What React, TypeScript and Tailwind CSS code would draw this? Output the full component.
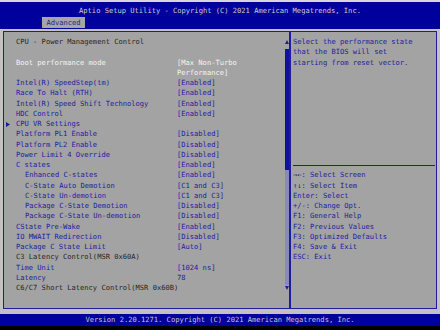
import React from "react";

type Row = {
  label?: string;
  value?: string;
  color?: "blue" | "white" | "dark";
  indent?: boolean;
  arrow?: boolean;
};

const rows: Row[] = [
  { label: "CPU - Power Management Control", color: "dark" },
  {},
  { label: "Boot performance mode", value: "[Max Non-Turbo", color: "white" },
  { label: "", value: "Performance]", color: "white" },
  { label: "Intel(R) SpeedStep(tm)", value: "[Enabled]" },
  { label: "Race To Halt (RTH)", value: "[Enabled]" },
  { label: "Intel(R) Speed Shift Technology", value: "[Enabled]" },
  { label: "HDC Control", value: "[Enabled]" },
  { label: "CPU VR Settings", arrow: true },
  { label: "Platform PL1 Enable", value: "[Disabled]" },
  { label: "Platform PL2 Enable", value: "[Disabled]" },
  { label: "Power Limit 4 Override", value: "[Disabled]" },
  { label: "C states", value: "[Enabled]" },
  { label: "Enhanced C-states", value: "[Enabled]", indent: true },
  { label: "C-State Auto Demotion", value: "[C1 and C3]", indent: true },
  { label: "C-State Un-demotion", value: "[C1 and C3]", indent: true },
  { label: "Package C-State Demotion", value: "[Disabled]", indent: true },
  { label: "Package C-State Un-demotion", value: "[Disabled]", indent: true },
  { label: "CState Pre-Wake", value: "[Enabled]" },
  { label: "IO MWAIT Redirection", value: "[Disabled]" },
  { label: "Package C State Limit", value: "[Auto]" },
  { label: "C3 Latency Control(MSR 0x60A)", color: "dark" },
  { label: "Time Unit", value: "[1024 ns]" },
  { label: "Latency", value: "78" },
  { label: "C6/C7 Short Latency Control(MSR 0x60B)", color: "dark" },
];

const keys = [
  "\u2192\u2190: Select Screen",
  "\u2191\u2193: Select Item",
  "Enter: Select",
  "+/-: Change Opt.",
  "F1: General Help",
  "F2: Previous Values",
  "F3: Optimized Defaults",
  "F4: Save & Exit",
  "ESC: Exit",
];

function colorClass(c?: Row["color"]) {
  if (c === "white") return "text-[#f4f4f4]";
  if (c === "dark") return "text-[#262626]";
  return "text-[#1c1ca0]";
}

export default function App() {
  return (
    <div className="w-[440px] h-[330px] overflow-hidden bg-[#c2c2c2] flex flex-col font-['DejaVu_Sans_Mono',monospace] text-[7.1px] leading-[10.25px]">
      <div className="h-[2px] bg-[#d6d6d6]" />
      <div className="h-[27px] bg-[#00009c] flex flex-col">
        <div className="pt-[4px] h-[14px] leading-[10px] text-center text-[#cfcfcf] whitespace-pre">
          Aptio Setup Utility - Copyright (C) 2021 American Megatrends, Inc.
        </div>
        <div className="ml-[42px] mt-[1px] w-[43px] h-[11px] bg-[#a6a6a6] text-[#1c1ca0] leading-[11px] text-center">
          Advanced
        </div>
      </div>
      <div className="h-[2px]" />
      <div className="mx-[3px] h-[278px] border border-[#1c1c9c] bg-[#a3a3a3] flex">
        {/* Left list */}
        <div className="w-[280px] pt-[5px] flex flex-col">
          {rows.map((r, i) => (
            <div key={i} className={`flex h-[10.25px] whitespace-pre ${colorClass(r.color)}`}>
              <div className="w-[12px] pl-[2px] flex items-center">
                {r.arrow && (
                  <svg width="4" height="5" viewBox="0 0 4 5">
                    <polygon points="0,0 4,2.5 0,5" fill="#1c1ca0" />
                  </svg>
                )}
              </div>
              <div className={`w-[161px] ${r.indent ? "pl-[9px]" : ""}`}>{r.label}</div>
              <div>{r.value}</div>
            </div>
          ))}
        </div>
        {/* Scrollbar */}
        <div className="w-[5px] flex flex-col items-center pt-[8px]">
          <svg width="4" height="4" viewBox="0 0 4 4" className="block">
            <polygon points="2,0 4,4 0,4" fill="#1c1ca0" />
          </svg>
          <div className="mt-[5px] w-[4px] h-[121px] bg-[#10109c]" />
          <div className="w-[4px] h-[115px] bg-[#8a8ab8]" />
          <svg width="4" height="4" viewBox="0 0 4 4" className="block mt-[1px]">
            <polygon points="0,0 4,0 2,4" fill="#1c1ca0" />
          </svg>
        </div>
        <div className="w-[2px] bg-[#1c1c9c]" />
        {/* Right help panel */}
        <div className="flex-1 pt-[5px] pl-[2px] pr-[1px] flex flex-col text-[#1c1ca0] whitespace-pre">
          <div className="h-[10.25px]">Select the performance state</div>
          <div className="h-[10.25px]">that the BIOS will set</div>
          <div className="h-[10.25px]">starting from reset vector.</div>
          <div className="h-[92.25px]" />
          <div className="h-[10.25px] flex items-center">
            <div className="h-px w-full bg-[#1c1c9c]" />
          </div>
          {keys.map((k) => (
            <div key={k} className="h-[10.25px]">{k}</div>
          ))}
        </div>
      </div>
      <div className="h-[5px]" />
      <div className="h-[12px] bg-[#00009c] text-[#c8c8c8] text-center leading-[12px] whitespace-pre">
        Version 2.20.1271. Copyright (C) 2021 American Megatrends, Inc.
      </div>
      <div className="flex-1 bg-black" />
    </div>
  );
}
